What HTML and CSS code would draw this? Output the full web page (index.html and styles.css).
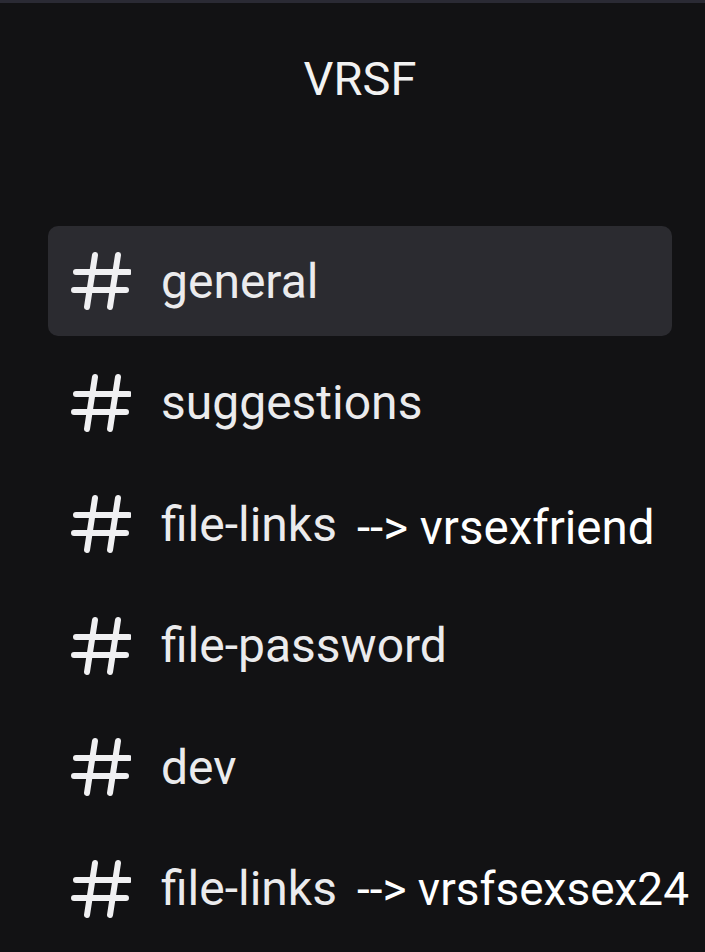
FILE: index.html
```html
<!DOCTYPE html>
<html>
  <head>
    <title>VRSF</title>
    <link rel="stylesheet" href="styles.css">
  </head>
  <body>
    <div class="topbar"></div>
    <div class="container">
      <h1 class="server-name">VRSF</h1>
      <ul class="channels">
        <li class="channel active">
          <svg class="hash" viewBox="0 0 60 60"><path d="M5 21H58M3 39H55M24 4L16 56M47 4L39 56"/></svg>
          <span class="name">general</span>
        </li>
        <li class="channel">
          <svg class="hash" viewBox="0 0 60 60"><path d="M5 21H58M3 39H55M24 4L16 56M47 4L39 56"/></svg>
          <span class="name">suggestions</span>
        </li>
        <li class="channel">
          <svg class="hash" viewBox="0 0 60 60"><path d="M5 21H58M3 39H55M24 4L16 56M47 4L39 56"/></svg>
          <span class="name">file-links</span>
          <span class="note">--&gt; vrsexfriend</span>
        </li>
        <li class="channel">
          <svg class="hash" viewBox="0 0 60 60"><path d="M5 21H58M3 39H55M24 4L16 56M47 4L39 56"/></svg>
          <span class="name">file-password</span>
        </li>
        <li class="channel">
          <svg class="hash" viewBox="0 0 60 60"><path d="M5 21H58M3 39H55M24 4L16 56M47 4L39 56"/></svg>
          <span class="name">dev</span>
        </li>
        <li class="channel">
          <svg class="hash" viewBox="0 0 60 60"><path d="M5 21H58M3 39H55M24 4L16 56M47 4L39 56"/></svg>
          <span class="name">file-links</span>
          <span class="note small">--&gt; vrsfsexsex24</span>
        </li>
      </ul>
    </div>
  </body>
</html>
```

FILE: styles.css
```css
* {
  box-sizing: border-box;
}

body {
  margin: 0;
  background-color: #121214;
  color: #ececee;
  font-family: Roboto, "Liberation Sans", sans-serif;
  height: 952px;
  overflow: hidden;
}

.topbar {
  height: 3px;
  background-color: #2a2a34;
}

.container {
  width: 624px;
  margin-left: 48px;
}

.server-name {
  margin: 52px 0 0;
  font-size: 47px;
  font-weight: 400;
  line-height: 47px;
  text-align: center;
  color: #f2f2f2;
}

.channels {
  list-style: none;
  margin: 124px 0 0;
  padding: 0;
  display: flex;
  flex-direction: column;
  gap: 11.5px;
}

.channel {
  height: 110px;
  display: flex;
  align-items: center;
  padding-left: 23px;
  border-radius: 10px;
  white-space: nowrap;
  font-size: 48px;
}

.channel.active {
  background-color: #2b2b30;
}

.hash {
  width: 60px;
  height: 60px;
  flex-shrink: 0;
  margin-right: 30px;
  fill: none;
  stroke: #f0f0f2;
  stroke-width: 6;
  stroke-linecap: round;
}

.name {
  color: #ebebed;
}

.note {
  margin-left: 20px;
  color: #ffffff;
  font-size: 47.5px;
  transform: translateY(4px);
}

.note.small {
  font-size: 46px;
  transform: none;
}
```
